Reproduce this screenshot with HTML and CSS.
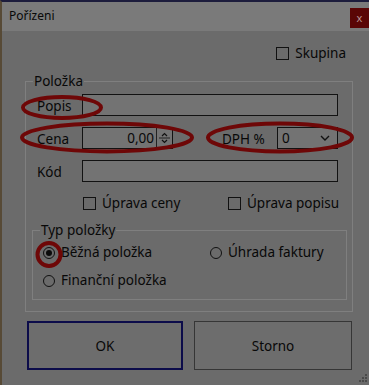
FILE: index.html
```
<!DOCTYPE html>
<html lang="cs">
<head>
  <meta charset="UTF-8">
  <title>Pořízeni</title>
  <link rel="stylesheet" href="styles.css">
</head>
<body>
  <div class="dialog">
    <!-- titulek okna -->
    <div class="titlebar">
      <span class="title">Pořízeni</span>
      <div class="close">x</div>
    </div>

    <div class="content">
      <div class="top-row">
        <label class="check"><span class="box"></span>Skupina</label>
      </div>

      <fieldset class="group">
        <legend>Položka</legend>
        <div class="row">
          <span class="lbl">Popis</span>
          <div class="input wide"></div>
        </div>
        <div class="row">
          <span class="lbl">Cena</span>
          <div class="input num">
            <span class="val">0,00</span>
            <span class="spin">
              <svg width="13" height="18" viewBox="0 0 13 18">
                <path d="M4 7 L6.5 4.5 L9 7" fill="none" stroke="#111" stroke-width="1.2"/>
                <line x1="1" y1="9" x2="12" y2="9" stroke="#222" stroke-width="1"/>
                <path d="M4 11 L6.5 13.5 L9 11" fill="none" stroke="#111" stroke-width="1.2"/>
              </svg>
            </span>
          </div>
          <span class="lbl-dph">DPH %</span>
          <div class="input combo">
            <span>0</span>
            <svg width="10" height="6" viewBox="0 0 10 6">
              <path d="M1 1 L5 5 L9 1" fill="none" stroke="#111" stroke-width="1.4"/>
            </svg>
          </div>
        </div>
        <div class="row row-kod">
          <span class="lbl">Kód</span>
          <div class="input wide"></div>
        </div>
        <div class="checks">
          <label class="check c-first"><span class="box"></span>Úprava ceny</label>
          <label class="check"><span class="box"></span>Úprava popisu</label>
        </div>

        <fieldset class="group inner">
          <legend>Typ položky</legend>
          <div class="radios">
            <label class="radio r-first"><span class="dot on"></span>Běžná položka</label>
            <label class="radio"><span class="dot"></span>Úhrada faktury</label>
          </div>
          <div class="radios second">
            <label class="radio"><span class="dot"></span>Finanční položka</label>
          </div>
        </fieldset>
      </fieldset>

      <div class="buttons">
        <div class="btn default">OK</div>
        <div class="btn">Storno</div>
      </div>
      <div class="footer">
        <svg width="9" height="9" viewBox="0 0 9 9">
          <rect x="7" y="1" width="2" height="2" fill="#4a4a4a"/>
          <rect x="4" y="4" width="2" height="2" fill="#4a4a4a"/>
          <rect x="7" y="4" width="2" height="2" fill="#4a4a4a"/>
          <rect x="1" y="7" width="2" height="2" fill="#4a4a4a"/>
          <rect x="4" y="7" width="2" height="2" fill="#4a4a4a"/>
          <rect x="7" y="7" width="2" height="2" fill="#4a4a4a"/>
        </svg>
      </div>
    </div>

    <!-- cervene zvyrazneni -->
    <svg class="marks" width="369" height="385" viewBox="0 0 369 385">
      <ellipse cx="62" cy="107.5" rx="39" ry="10.5" fill="none" stroke="#6e0707" stroke-width="4"/>
      <ellipse cx="107" cy="137.5" rx="85" ry="14" fill="none" stroke="#6e0707" stroke-width="4"/>
      <ellipse cx="280" cy="137.5" rx="72" ry="14" fill="none" stroke="#6e0707" stroke-width="4"/>
      <circle cx="49" cy="254.5" r="11.5" fill="none" stroke="#6e0707" stroke-width="4"/>
    </svg>
  </div>
</body>
</html>
```

FILE: styles.css
```
body {
  margin: 0;
  background: #6b6b6b;
  font-family: "Noto Sans", "Open Sans", sans-serif;
  font-size: 13.5px;
  color: #080808;
}

.dialog {
  position: relative;
  width: 369px;
  height: 385px;
  box-sizing: border-box;
  border-top: 2px solid #1c1c3c;
  border-left: 2px solid #574a36;
  background: #6b6b6b;
  overflow: hidden;
}

/* titulek */
.titlebar {
  height: 29px;
  background: #7a7a7a;
  display: flex;
  justify-content: space-between;
  align-items: flex-start;
}

.title {
  margin: 6px 0 0 7px;
  font-size: 12px;
  line-height: 16px;
}

.close {
  width: 19px;
  height: 20px;
  margin: 6px 0 0 0;
  background: #5a0606;
  color: #b89494;
  font-size: 11px;
  line-height: 19px;
  text-align: center;
}

.content {
  padding: 14px 16px 0 23px;
}

.top-row {
  display: flex;
  justify-content: flex-end;
  padding-right: 7px;
}

.check {
  display: flex;
  align-items: center;
  height: 17px;
  line-height: 17px;
}

.box {
  width: 11px;
  height: 11px;
  border: 1px solid #111;
  margin-right: 6px;
}

/* skupiny */
.group {
  margin: 11px 0 0 0;
  padding: 5px 0 11px 0;
  border: 1px solid #7f7f7f;
  min-width: 0;
}

.group legend {
  margin-left: 7px;
  padding: 0 1px;
  line-height: 16px;
}

.row {
  display: flex;
  align-items: center;
  height: 22px;
  padding-left: 11px;
  margin-bottom: 11px;
}

.row-kod {
  margin-top: 1px;
  margin-bottom: 0;
}

.lbl {
  width: 45px;
  padding-top: 2px;
}

.input {
  height: 22px;
  box-sizing: border-box;
  border: 1px solid #121212;
  background: #737373;
}

.wide {
  width: 256px;
}

.num {
  width: 91px;
  display: flex;
  justify-content: flex-end;
  align-items: center;
}

.val {
  margin-right: 2px;
}

.spin {
  width: 15px;
  height: 20px;
  display: flex;
  align-items: center;
  justify-content: center;
  border-left: 1px solid #222;
}

.lbl-dph {
  margin-left: 49px;
  width: 55px;
  padding-top: 2px;
}

.combo {
  width: 61px;
  display: flex;
  justify-content: space-between;
  align-items: center;
  padding: 0 7px 0 4px;
}

.checks {
  display: flex;
  height: 17px;
  margin-top: 13px;
  padding-left: 57px;
}

.c-first {
  width: 145px;
}

.inner {
  margin: 10px 5px 0 6px;
  padding: 6px 0 10px 0;
}

.radios {
  display: flex;
  height: 17px;
  padding-left: 10px;
}

.radios.second {
  margin-top: 11px;
}

.radio {
  display: flex;
  align-items: center;
  line-height: 17px;
}

.r-first {
  width: 167px;
}

.dot {
  width: 10px;
  height: 10px;
  border: 1px solid #111;
  border-radius: 50%;
  margin-right: 6px;
  display: flex;
  align-items: center;
  justify-content: center;
}

.dot.on::after {
  content: "";
  width: 6px;
  height: 6px;
  border-radius: 50%;
  background: #0a0a0a;
}

/* tlacitka */
.buttons {
  display: flex;
  gap: 11px;
  margin-top: 9px;
  padding-left: 2px;
}

.btn {
  height: 49px;
  box-sizing: border-box;
  border: 1px solid #363636;
  background: #6d6d6d;
  display: flex;
  align-items: center;
  justify-content: center;
  width: 158px;
}

.btn.default {
  width: 156px;
  border: 2px solid #0c0c4a;
}

.footer {
  display: flex;
  justify-content: flex-end;
  margin: 3px -14px 0 0;
}

.marks {
  position: absolute;
  left: -2px;
  top: -2px;
  pointer-events: none;
}
```
